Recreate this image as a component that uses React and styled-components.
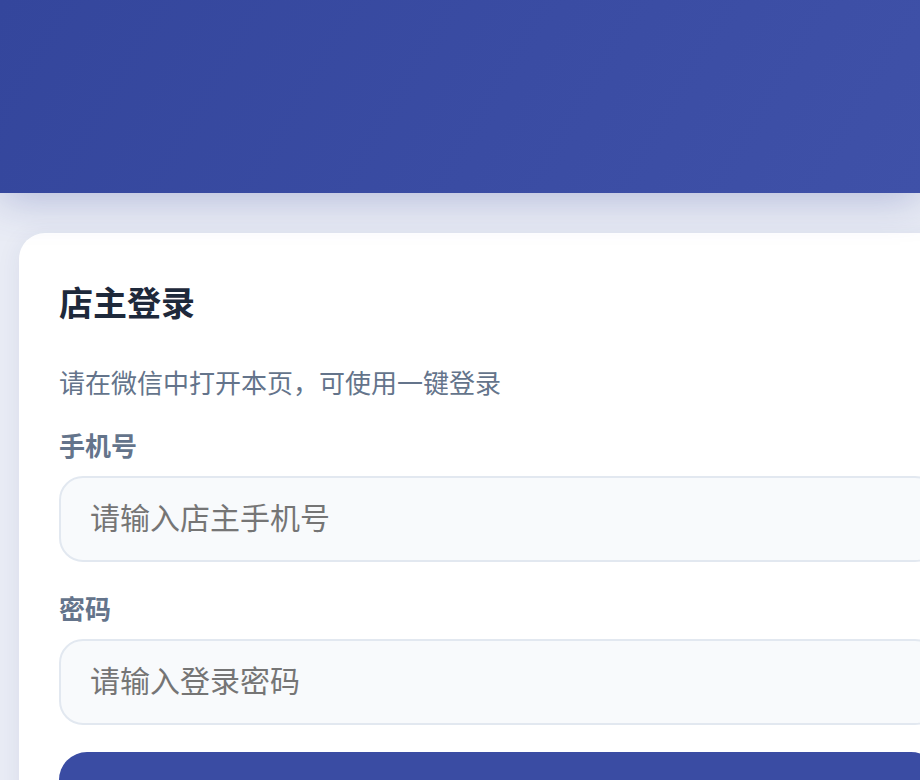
import React from "react";
import styled, { createGlobalStyle } from "styled-components";

const GlobalStyle = createGlobalStyle`
  html, body {
    margin: 0;
    padding: 0;
    background: #e9ecf5;
    overflow: hidden;
  }
  body {
    font-family: "Noto Sans CJK SC", "Noto Sans", sans-serif;
  }
  * { box-sizing: border-box; }
`;

const Page = styled.div`
  min-height: 780px;
  display: flex;
  flex-direction: column;
`;

const Hero = styled.header`
  height: 193px;
  background: linear-gradient(120deg, #34469c 0%, #3a4ca3 55%, #3f51a8 100%);
  box-shadow: 0 6px 40px rgba(53, 71, 157, 0.3);
  position: relative;
  z-index: 1;
`;

const Main = styled.main`
  display: flex;
  padding: 40px 0 0 19px;
`;

const Card = styled.section`
  flex: none;
  width: 960px;
  background: #ffffff;
  border-radius: 26px;
  padding: 49px 40px 40px;
  box-shadow: 0 4px 24px rgba(40, 55, 120, 0.08);
  display: flex;
  flex-direction: column;
`;

const Title = styled.h1`
  margin: 0;
  font-size: 34px;
  line-height: 40px;
  font-weight: 700;
  color: #1e293b;
`;

const Hint = styled.p`
  margin: 42px 0 0;
  font-size: 26px;
  line-height: 36px;
  color: #64748b;
`;

const Field = styled.div`
  display: flex;
  flex-direction: column;
  gap: 14px;
  margin-top: ${(p) => p.$top}px;
`;

const Label = styled.label`
  font-size: 26px;
  line-height: 34px;
  font-weight: 700;
  color: #64748b;
`;

const Input = styled.input`
  height: 86px;
  width: 100%;
  padding: 0 29px 6px;
  border: 2px solid #e2e8f0;
  border-radius: 24px;
  background: #f8fafc;
  font-family: inherit;
  font-size: 30px;
  color: #1e293b;
  outline: none;
  &::placeholder {
    color: #757575;
  }
`;

const Submit = styled.button`
  margin-top: 27px;
  height: 88px;
  border: none;
  border-radius: 28px;
  background: #3a4ca3;
  color: #ffffff;
  font-family: inherit;
  font-size: 30px;
  font-weight: 700;
`;

export default function App() {
  return (
    <>
      <GlobalStyle />
      <Page>
        <Hero />
        <Main>
          <Card>
            <Title>店主登录</Title>
            <Hint>请在微信中打开本页，可使用一键登录</Hint>
            <Field $top={28}>
              <Label htmlFor="phone">手机号</Label>
              <Input id="phone" type="tel" placeholder="请输入店主手机号" />
            </Field>
            <Field $top={29}>
              <Label htmlFor="pwd">密码</Label>
              <Input id="pwd" type="password" placeholder="请输入登录密码" />
            </Field>
            <Submit type="button">登录</Submit>
          </Card>
        </Main>
      </Page>
    </>
  );
}
